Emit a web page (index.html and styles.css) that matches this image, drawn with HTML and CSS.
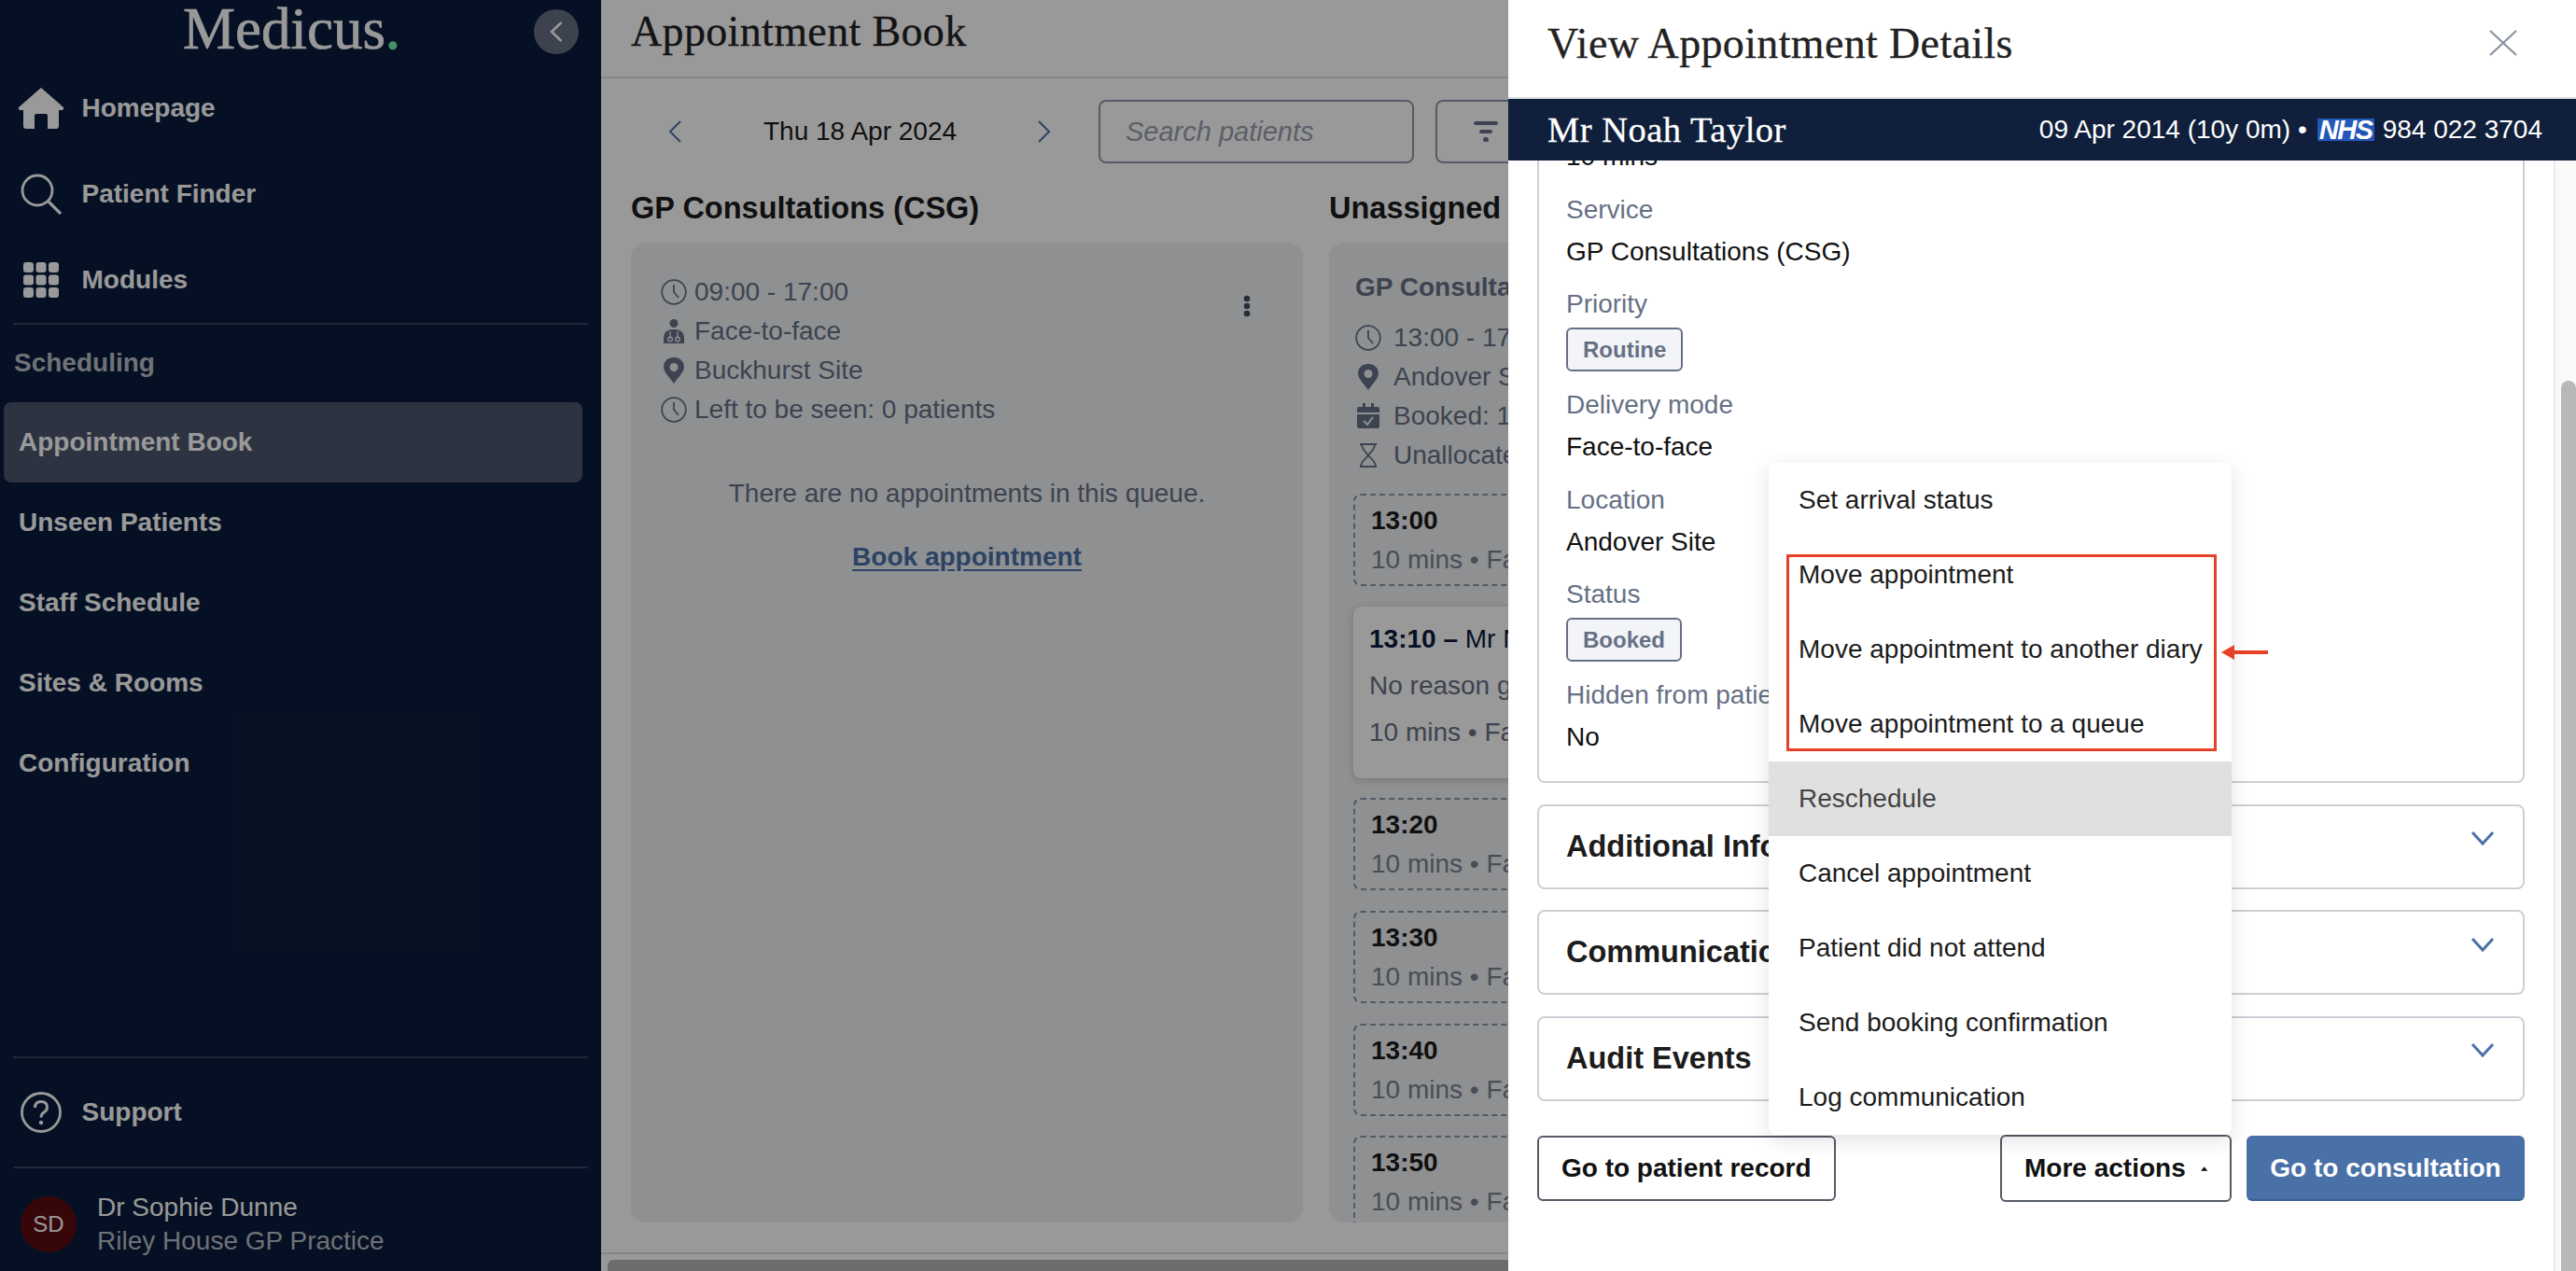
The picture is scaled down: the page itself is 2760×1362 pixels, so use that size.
FILE: index.html
```html
<!DOCTYPE html>
<html lang="en">
<head>
    <meta charset="UTF-8">
    <title>Appointment Book</title>
    <link rel="stylesheet" href="styles.css">
</head>
<body>
<div class="app">
    <aside class="sidebar">
        <div class="logo-row">
            <div class="logo">Medicus<span class="logo-dot">.</span></div>
            <div class="collapse-btn">
                <svg width="14" height="22" viewBox="0 0 14 22"><path d="M12.500 1 L2 11 L12.500 21" fill="none" stroke="#fff" stroke-width="2.500"/></svg>
            </div>
        </div>
        <div class="nav-row">
            <span class="nav-icon">
                <svg width="50" height="44" viewBox="0 0 50 44"><path d="M25 0 L49 21 Q50 24 47 24 L44 24 L44 41 Q44 44 41 44 L32 44 L32 30 Q32 28 30 28 L20 28 Q18 28 18 30 L18 44 L9 44 Q6 44 6 41 L6 24 L3 24 Q0 24 1 21 Z" fill="#fff"/></svg>
            </span>
            Homepage
        </div>
        <div class="nav-row">
            <span class="nav-icon">
                <svg width="44" height="44" viewBox="0 0 44 44"><circle cx="18" cy="18" r="16" fill="none" stroke="#fff" stroke-width="2.800"/><path d="M30 30 L43 43" stroke="#fff" stroke-width="3.200"/></svg>
            </span>
            Patient Finder
        </div>
        <div class="nav-row">
            <span class="nav-icon">
                <svg width="38" height="38" viewBox="0 0 38 38" fill="#fff">
                    <rect x="0" y="0" width="11" height="11" rx="3"/><rect x="13.500" y="0" width="11" height="11" rx="3"/><rect x="27" y="0" width="11" height="11" rx="3"/>
                    <rect x="0" y="13.500" width="11" height="11" rx="3"/><rect x="13.500" y="13.500" width="11" height="11" rx="3"/><rect x="27" y="13.500" width="11" height="11" rx="3"/>
                    <rect x="0" y="27" width="11" height="11" rx="3"/><rect x="13.500" y="27" width="11" height="11" rx="3"/><rect x="27" y="27" width="11" height="11" rx="3"/>
                </svg>
            </span>
            Modules
        </div>
        <div class="divider"></div>
        <div class="nav-heading">Scheduling</div>
        <div class="sub-item active">Appointment Book</div>
        <div class="sub-item">Unseen Patients</div>
        <div class="sub-item">Staff Schedule</div>
        <div class="sub-item">Sites &amp; Rooms</div>
        <div class="sub-item">Configuration</div>
        <div class="spacer"></div>
        <div class="divider"></div>
        <div class="nav-row support-row">
            <span class="nav-icon">
                <svg width="44" height="44" viewBox="0 0 44 44"><circle cx="22" cy="22" r="20.500" fill="none" stroke="#fff" stroke-width="2.800"/><path d="M15.500 17 Q15.500 10.500 22 10.500 Q28.500 10.500 28.500 16.500 Q28.500 20 25 22 Q22 24 22 27.500" fill="none" stroke="#fff" stroke-width="3"/><circle cx="22" cy="33" r="2.200" fill="#fff"/></svg>
            </span>
            Support
        </div>
        <div class="divider"></div>
        <div class="user-row">
            <div class="avatar">SD</div>
            <div class="user-text">
                <div class="user-name">Dr Sophie Dunne</div>
                <div class="user-practice">Riley House GP Practice</div>
            </div>
        </div>
    </aside>

    <main class="main">
        <header class="main-header">
            <h1 class="page-title">Appointment Book</h1>
        </header>
        <div class="toolbar">
            <svg class="date-arrow" width="16" height="24" viewBox="0 0 16 24"><path d="M14 1 L3 12 L14 23" fill="none" stroke="#4a70a8" stroke-width="2"/></svg>
            <div class="date-label">Thu 18 Apr 2024</div>
            <svg class="date-arrow" width="16" height="24" viewBox="0 0 16 24"><path d="M2 1 L13 12 L2 23" fill="none" stroke="#4a70a8" stroke-width="2"/></svg>
            <div class="search-box">Search patients</div>
            <div class="filter-btn">
                <svg width="26" height="22" viewBox="0 0 26 22" fill="#667085"><rect x="0" y="0" width="26" height="4" rx="2"/><rect x="6" y="9" width="14" height="4" rx="2"/><rect x="10" y="17" width="6" height="5" rx="2.500"/></svg>
                Filter
            </div>
        </div>

        <div class="board">
            <section class="queue">
                <h2 class="queue-title">GP Consultations (CSG)</h2>
                <div class="queue-card">
                    <div class="queue-head">
                        <div class="meta">
                            <div class="meta-row">
                                <svg class="meta-icon" viewBox="0 0 28 28"><circle cx="14" cy="14" r="12.800" fill="none" stroke="#667085" stroke-width="1.800"/><path d="M14 6 L14 14 L19 20" fill="none" stroke="#667085" stroke-width="1.800"/></svg>
                                09:00 - 17:00
                            </div>
                            <div class="meta-row">
                                <svg class="meta-icon" viewBox="0 0 28 28" fill="#667085"><circle cx="14" cy="5.500" r="4.500"/><path d="M3 27 L3 21 Q3 12 14 12 Q25 12 25 21 L25 27 Z"/><circle cx="10" cy="22.500" r="2.400" fill="none" stroke="#eef0f3" stroke-width="1.200"/><circle cx="18" cy="22.500" r="2.400" fill="none" stroke="#eef0f3" stroke-width="1.200"/><path d="M10 22 L10 14 M18 22 L18 14" stroke="#eef0f3" stroke-width="1.200"/></svg>
                                Face-to-face
                            </div>
                            <div class="meta-row">
                                <svg class="meta-icon" viewBox="0 0 28 28"><path fill-rule="evenodd" d="M14 0 C22 0 25 6 25 10 C25 16 18 22 14 28 C10 22 3 16 3 10 C3 6 6 0 14 0 Z M14 6 A4.500 4.500 0 1 0 14.010 6 Z" fill="#667085"/></svg>
                                Buckhurst Site
                            </div>
                            <div class="meta-row">
                                <svg class="meta-icon" viewBox="0 0 28 28"><circle cx="14" cy="14" r="12.800" fill="none" stroke="#667085" stroke-width="1.800"/><path d="M14 6 L14 14 L19 20" fill="none" stroke="#667085" stroke-width="1.800"/></svg>
                                Left to be seen: 0 patients
                            </div>
                        </div>
                        <svg class="kebab" width="8" height="24" viewBox="0 0 8 24" fill="#444c5c"><circle cx="4" cy="4" r="3.300"/><circle cx="4" cy="12" r="3.300"/><circle cx="4" cy="20" r="3.300"/></svg>
                    </div>
                    <p class="empty-msg">There are no appointments in this queue.</p>
                    <a class="book-link">Book appointment</a>
                </div>
            </section>

            <section class="queue">
                <h2 class="queue-title">Unassigned Appointments</h2>
                <div class="queue-card slots-card">
                    <h3 class="slots-title">GP Consultations (CSG)</h3>
                    <div class="meta">
                        <div class="meta-row">
                            <svg class="meta-icon" viewBox="0 0 28 28"><circle cx="14" cy="14" r="12.800" fill="none" stroke="#667085" stroke-width="1.800"/><path d="M14 6 L14 14 L19 20" fill="none" stroke="#667085" stroke-width="1.800"/></svg>
                            13:00 - 17:00
                        </div>
                        <div class="meta-row">
                            <svg class="meta-icon" viewBox="0 0 28 28"><path fill-rule="evenodd" d="M14 0 C22 0 25 6 25 10 C25 16 18 22 14 28 C10 22 3 16 3 10 C3 6 6 0 14 0 Z M14 6 A4.500 4.500 0 1 0 14.010 6 Z" fill="#667085"/></svg>
                            Andover Site
                        </div>
                        <div class="meta-row">
                            <svg class="meta-icon" viewBox="0 0 28 28"><path fill-rule="evenodd" d="M8 0 H11 V4 H17 V0 H20 V4 H24 Q26 4 26 6 V10 H2 V6 Q2 4 4 4 H8 Z M2 12 H26 V25 Q26 27 24 27 H4 Q2 27 2 25 Z" fill="#667085"/><path d="M9 19 L13 23 L19 15" fill="none" stroke="#eef0f3" stroke-width="2"/></svg>
                            Booked: 1
                        </div>
                        <div class="meta-row">
                            <svg class="meta-icon" viewBox="0 0 28 28"><path d="M5 2 H23 M5 26 H23 M7 2 C7 8 12 11 14 14 C16 11 21 8 21 2 M14 14 C12 17 6 20 6 26 M14 14 C16 17 22 20 22 26" fill="none" stroke="#667085" stroke-width="1.800"/></svg>
                            Unallocated: 5
                        </div>
                    </div>
                    <div class="slot">
                        <div class="slot-time">13:00</div>
                        <div class="slot-sub">10 mins • Face-to-face</div>
                    </div>
                    <div class="booked">
                        <div class="booked-title"><b>13:10 –</b> Mr Noah Taylor</div>
                        <div class="booked-line">No reason given</div>
                        <div class="booked-line">10 mins • Face-to-face</div>
                    </div>
                    <div class="slot">
                        <div class="slot-time">13:20</div>
                        <div class="slot-sub">10 mins • Face-to-face</div>
                    </div>
                    <div class="slot">
                        <div class="slot-time">13:30</div>
                        <div class="slot-sub">10 mins • Face-to-face</div>
                    </div>
                    <div class="slot">
                        <div class="slot-time">13:40</div>
                        <div class="slot-sub">10 mins • Face-to-face</div>
                    </div>
                    <div class="slot">
                        <div class="slot-time">13:50</div>
                        <div class="slot-sub">10 mins • Face-to-face</div>
                    </div>
                </div>
            </section>
        </div>

        <div class="hscroll"><div class="hscroll-thumb"></div></div>
    </main>
</div>

<div class="overlay"></div>

<aside class="drawer">
    <div class="drawer-head">
        <h2 class="drawer-title">View Appointment Details</h2>
        <svg class="drawer-close" width="30" height="28" viewBox="0 0 30 28"><path d="M1 1 L29 27 M29 1 L1 27" stroke="#8a92a0" stroke-width="2.200" fill="none"/></svg>
    </div>
    <div class="patient-bar">
        <div class="patient-name">Mr Noah Taylor</div>
        <div class="patient-info">
            09 Apr 2014 (10y 0m) •
            <span class="nhs-logo">NHS</span>
            984 022 3704
        </div>
    </div>

    <div class="drawer-scroll">
        <div class="details-card">
            <div class="field-value">10 mins</div>
            <div class="field-label">Service</div>
            <div class="field-value">GP Consultations (CSG)</div>
            <div class="field-label">Priority</div>
            <div class="badge">Routine</div>
            <div class="field-label">Delivery mode</div>
            <div class="field-value">Face-to-face</div>
            <div class="field-label">Location</div>
            <div class="field-value">Andover Site</div>
            <div class="field-label">Status</div>
            <div class="badge">Booked</div>
            <div class="field-label">Hidden from patient</div>
            <div class="field-value">No</div>
        </div>
        <div class="fold-box">
            <span class="fold-title">Additional Information</span>
            <svg class="fold-chevron" width="26" height="16" viewBox="0 0 26 16"><path d="M2 2 L13 14 L24 2" fill="none" stroke="#4a70a8" stroke-width="3"/></svg>
        </div>
        <div class="fold-box">
            <span class="fold-title">Communications</span>
            <svg class="fold-chevron" width="26" height="16" viewBox="0 0 26 16"><path d="M2 2 L13 14 L24 2" fill="none" stroke="#4a70a8" stroke-width="3"/></svg>
        </div>
        <div class="fold-box">
            <span class="fold-title">Audit Events</span>
            <svg class="fold-chevron" width="26" height="16" viewBox="0 0 26 16"><path d="M2 2 L13 14 L24 2" fill="none" stroke="#4a70a8" stroke-width="3"/></svg>
        </div>
    </div>

    <div class="drawer-footer">
        <button class="btn">Go to patient record</button>
        <button class="btn btn-more">More actions
            <svg width="18" height="11" viewBox="0 0 18 11"><path d="M9 0 L18 11 L0 11 Z" fill="#111"/></svg>
        </button>
        <button class="btn btn-primary">Go to consultation</button>
    </div>

    <div class="menu">
        <div class="menu-item">Set arrival status</div>
        <div class="menu-item">Move appointment</div>
        <div class="menu-item">Move appointment to another diary</div>
        <div class="menu-item">Move appointment to a queue</div>
        <div class="menu-item hover">Reschedule</div>
        <div class="menu-item">Cancel appointment</div>
        <div class="menu-item">Patient did not attend</div>
        <div class="menu-item">Send booking confirmation</div>
        <div class="menu-item">Log communication</div>
        <div class="callout"></div>
        <svg class="callout-arrow" width="50" height="16" viewBox="0 0 50 16"><path d="M0 8 L14 0 L14 6 L50 6 L50 10 L14 10 L14 16 Z" fill="#e8412a"/></svg>
    </div>

    <div class="drawer-track"></div>
    <div class="drawer-thumb"></div>
</aside>
</body>
</html>
```

FILE: styles.css
```css
* {
    box-sizing: border-box;
}

html, body {
    margin: 0;
    padding: 0;
    height: 100%;
    overflow: hidden;
}

body {
    font-family: "Liberation Sans", Arial, sans-serif;
    font-size: 28px;
    color: #1c1c1c;
    background-color: #fff;
    position: relative;
}

.app {
    display: flex;
    height: 1362px;
    width: 2760px;
}

/* sidebar */
.sidebar {
    width: 644px;
    flex: none;
    height: 100%;
    display: flex;
    flex-direction: column;
    background-color: #0a1c3c;
    color: #fff;
}

.logo-row {
    height: 70px;
    position: relative;
    padding-left: 196px;
    flex: none;
}

.logo {
    font-family: "Liberation Serif", serif;
    font-size: 63px;
    line-height: 62px;
    color: #fff;
    -webkit-text-stroke: 0.7px #fff;
}

.logo-dot {
    color: #6ff3b0;
    -webkit-text-stroke: 1.5px #6ff3b0;
}

.collapse-btn {
    position: absolute;
    left: 572px;
    top: 10px;
    width: 48px;
    height: 48px;
    border-radius: 50%;
    background-color: #677183;
    display: flex;
    align-items: center;
    justify-content: center;
}

.nav-row {
    height: 92px;
    flex: none;
    display: flex;
    align-items: center;
    padding-left: 19px;
    font-weight: bold;
    font-size: 28px;
}

.nav-icon {
    width: 50px;
    margin-right: 18.500px;
    display: flex;
    justify-content: center;
}

.divider {
    height: 2px;
    margin: 0 14px;
    background-color: #344160;
    flex: none;
}

.nav-heading {
    font-weight: bold;
    padding-left: 15px;
    line-height: 40px;
    margin: 21px 0 22px;
    color: #b9bec5;
}

.sub-item {
    height: 86px;
    flex: none;
    display: flex;
    align-items: center;
    margin: 0 20px 0 4px;
    padding-left: 16px;
    font-weight: bold;
    border-radius: 8px;
}

.sub-item.active {
    background-color: #4b556b;
}

.spacer {
    flex: 1;
}

.support-row {
    height: 116px;
}

.user-row {
    display: flex;
    align-items: center;
    padding: 10px 0 0 22px;
    flex: none;
    height: 110px;
}

.avatar {
    width: 60px;
    height: 60px;
    border-radius: 50%;
    background-color: #5c0a0f;
    font-size: 24px;
    display: flex;
    align-items: center;
    justify-content: center;
    margin-right: 22px;
}

.user-name {
    line-height: 36px;
}

.user-practice {
    line-height: 36px;
    color: #b9bec5;
}

/* main area */
.main {
    flex: 1;
    min-width: 0;
    display: flex;
    flex-direction: column;
    overflow: hidden;
    background-color: #fff;
}

.main-header {
    height: 84px;
    flex: none;
    border-bottom: 2px solid #dcdfe4;
    padding-left: 32px;
}

.page-title {
    margin: 0;
    font-family: "Liberation Serif", serif;
    font-weight: normal;
    font-size: 46px;
    line-height: 68px;
    letter-spacing: 0.35px;
    color: #222;
    -webkit-text-stroke: 0.3px #222;
}

.toolbar {
    display: flex;
    align-items: center;
    height: 68px;
    margin-top: 23px;
    flex: none;
    padding-left: 71px;
}

.date-label {
    width: 206px;
    margin: 0 87px;
    white-space: nowrap;
}

.search-box {
    width: 338px;
    height: 68px;
    margin-left: 50px;
    border: 2px solid #8e98aa;
    border-radius: 8px;
    padding-left: 27px;
    display: flex;
    align-items: center;
    font-style: italic;
    font-size: 29px;
    color: #98a0ad;
}

.filter-btn {
    width: 200px;
    height: 68px;
    margin-left: 23px;
    border: 2px solid #8e98aa;
    border-radius: 8px;
    padding-left: 39px;
    display: flex;
    align-items: center;
    gap: 12px;
}

.board {
    flex: 1;
    min-height: 0;
    display: flex;
    gap: 28px;
    margin: 28px 0 32px 32px;
}

.queue {
    width: 720px;
    flex: none;
    display: flex;
    flex-direction: column;
}

.queue-title {
    margin: 0 0 17px;
    font-size: 32.500px;
    line-height: 40px;
    font-weight: bold;
    color: #1c1c1c;
    white-space: nowrap;
}

.queue-card {
    flex: 1;
    min-height: 0;
    overflow: hidden;
    background-color: #eef0f3;
    border-radius: 16px;
    padding: 32px 60px 0 32px;
    text-align: center;
}

.queue-head {
    display: flex;
    justify-content: space-between;
    align-items: flex-start;
    text-align: left;
}

.kebab {
    margin-top: 24px;
    margin-right: -4px;
}

.meta-row {
    display: flex;
    align-items: center;
    height: 42px;
    color: #667085;
    white-space: nowrap;
}

.meta-icon {
    width: 28px;
    height: 28px;
    margin-right: 8px;
    flex: none;
}

.empty-msg {
    margin: 49px 0 28px;
    line-height: 40px;
    color: #667085;
    padding-left: 28px;
}

.book-link {
    display: inline-block;
    padding-left: 28px;
    line-height: 40px;
    font-weight: bold;
    color: #4a70a8;
    text-decoration: underline;
    text-underline-offset: 4px;
}

.slots-card {
    padding: 28px 0 0 26px;
    text-align: left;
}

.slots-title {
    margin: 0 0 13px 2px;
    font-size: 28px;
    line-height: 40px;
    color: #667085;
}

.slots-card .meta {
    margin-left: 2px;
    margin-bottom: 20px;
}

.slots-card .meta-icon {
    margin-right: 13px;
}

.slot {
    height: 99px;
    margin: 0 26px 21.700px 0;
    border: 2px dashed #8d95a5;
    border-radius: 8px;
    padding-left: 17px;
}

.slot-time {
    font-weight: bold;
    line-height: 40px;
    margin-top: 7px;
}

.slot-sub {
    line-height: 40px;
    margin-top: 2px;
    color: #7a828f;
}

.booked {
    height: 184px;
    margin: 0 26px 21.700px 0;
    background-color: #fff;
    border-radius: 8px;
    padding: 15px 0 0 17px;
    box-shadow: 0 2px 8px rgba(0, 0, 0, 0.18);
}

.booked-title {
    line-height: 40px;
    color: #0a1c3c;
}

.booked-line {
    line-height: 40px;
    margin-top: 10px;
    color: #667085;
}

.hscroll {
    height: 20px;
    flex: none;
    border-top: 2px solid #dcdfe4;
    padding: 6px 0 0 7px;
}

.hscroll-thumb {
    height: 12px;
    border-radius: 6px 0 0 0;
    background-color: #b5b5b5;
}

.overlay {
    position: absolute;
    inset: 0;
    background-color: rgba(0, 0, 0, 0.4);
}

/* drawer */
.drawer {
    position: absolute;
    left: 1616px;
    top: 0;
    width: 1144px;
    height: 1362px;
    background-color: #fff;
    display: flex;
    flex-direction: column;
}

.drawer-head {
    height: 104px;
    flex: none;
    display: flex;
    justify-content: space-between;
    padding: 0 63px 0 42px;
}

.drawer-title {
    margin: 0;
    font-family: "Liberation Serif", serif;
    font-weight: normal;
    font-size: 46px;
    line-height: 94px;
    letter-spacing: 0.35px;
    color: #222;
    -webkit-text-stroke: 0.3px #222;
}

.drawer-close {
    margin-top: 32px;
}

.patient-bar {
    height: 68px;
    flex: none;
    border-top: 2px solid #dfe3e6;
    background-color: #101f3b;
    background-clip: padding-box;
    color: #fff;
    display: flex;
    justify-content: space-between;
    align-items: center;
    padding: 0 36px 0 42px;
}

.patient-name {
    font-family: "Liberation Serif", serif;
    font-size: 38.500px;
    letter-spacing: 0.5px;
    -webkit-text-stroke: 0.3px #fff;
}

.patient-info {
    display: flex;
    align-items: center;
    gap: 9px;
}

.nhs-logo {
    width: 61px;
    height: 24px;
    background-color: #2458b8;
    font-weight: bold;
    font-style: italic;
    font-size: 29px;
    letter-spacing: -1.500px;
    line-height: 24px;
    text-align: center;
    overflow: hidden;
    margin-left: 2px;
}

.drawer-scroll {
    flex: 1;
    min-height: 0;
    overflow: hidden;
    padding: 0 55px 0 31px;
}

.details-card {
    margin-top: -24px;
    border: 2px solid #ccd0d6;
    border-top: 0;
    border-radius: 0 0 8px 8px;
    padding: 0 29px 30px;
    height: 691px;
}

.field-label {
    line-height: 40px;
    color: #667085;
    margin-top: 16.500px;
}

.field-value {
    line-height: 40px;
    margin-top: 5px;
    color: #111;
}

.details-card .field-value:first-child {
    margin-top: 0;
}

.badge {
    display: table;
    height: 47px;
    line-height: 43px;
    margin-top: 4.500px;
    padding: 0 16px;
    border: 2px solid #667085;
    border-radius: 6px;
    background-color: #f2f4f7;
    color: #667085;
    font-size: 24px;
    font-weight: bold;
}

.fold-box {
    height: 91px;
    margin-top: 22.500px;
    border: 2px solid #ccd0d6;
    border-radius: 8px;
    padding: 0 30px 0 29px;
    display: flex;
    justify-content: space-between;
    align-items: center;
}

.fold-title {
    font-size: 32.500px;
    font-weight: bold;
    color: #1c1c1c;
    white-space: nowrap;
}

.fold-chevron {
    margin-bottom: 18px;
}

.drawer-footer {
    flex: none;
    display: flex;
    align-items: center;
    gap: 16px;
    padding: 0 55px 74px 31px;
}

.btn {
    height: 70px;
    padding: 0 24px;
    font-family: inherit;
    font-size: 28px;
    font-weight: bold;
    color: #111;
    background-color: #fff;
    border: 2px solid #555b66;
    border-radius: 6px;
    display: flex;
    align-items: center;
    gap: 16px;
    white-space: nowrap;
}

.btn-more {
    height: 72px;
    width: 248px;
    margin-left: auto;
}

.btn-primary {
    width: 298px;
    justify-content: center;
    color: #fff;
    background-color: #4a70a8;
    border-color: #4a70a8;
    border-bottom-color: #3c5f94;
}

.menu {
    position: absolute;
    left: 279px;
    top: 496px;
    width: 496px;
    background-color: #fff;
    border-radius: 8px;
    box-shadow: 0 6px 22px rgba(0, 0, 0, 0.12);
}

.menu-item {
    height: 80px;
    display: flex;
    align-items: center;
    padding-left: 32px;
    color: #1c1c1c;
    white-space: nowrap;
}

.menu-item.hover {
    background-color: #e0e0e0;
    color: #444;
}

.callout {
    position: absolute;
    left: 19px;
    top: 98px;
    width: 461px;
    height: 211px;
    border: 3px solid #e8412a;
}

.callout-arrow {
    position: absolute;
    left: 485px;
    top: 195px;
}

.drawer-track {
    position: absolute;
    left: 1120px;
    top: 172px;
    bottom: 0;
    width: 24px;
    border-left: 2px solid #e8e8e8;
    background-color: #fafafa;
}

.drawer-thumb {
    position: absolute;
    left: 1128px;
    top: 408px;
    bottom: 0;
    width: 16px;
    border-radius: 8px 8px 0 0;
    background-color: #b8b8b8;
}
```
